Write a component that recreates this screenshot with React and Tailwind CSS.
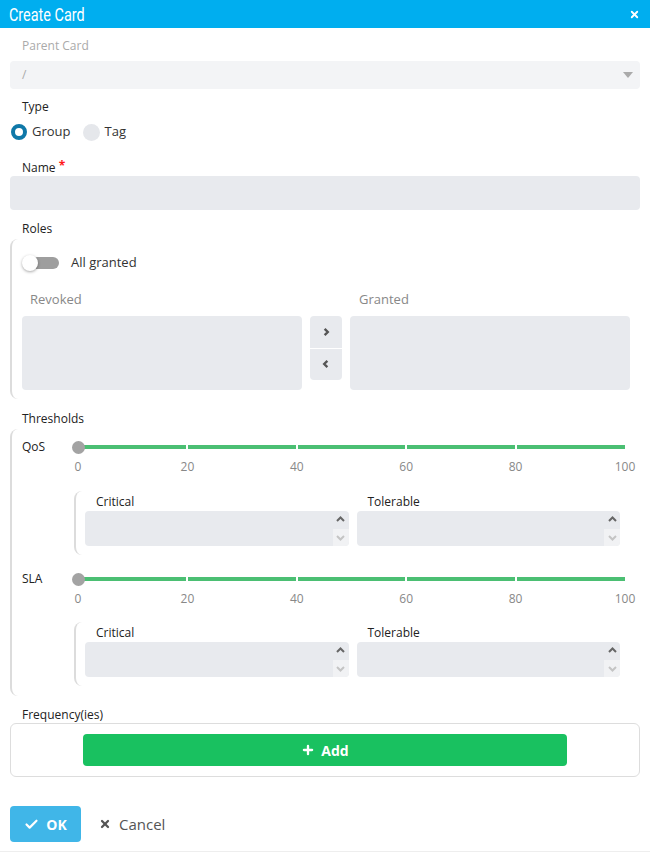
import { Check, Plus, X } from 'lucide-react';

const FONT = { fontFamily: '"Open Sans", "Liberation Sans", sans-serif' };

function Chevron({ dir = 'up', className = '', width = 2 }) {
  const d = {
    up: 'M2 7 L5.5 3.5 L9 7',
    down: 'M2 4 L5.5 7.5 L9 4',
    right: 'M4 2 L7.5 5.5 L4 9',
    left: 'M7 2 L3.5 5.5 L7 9',
  }[dir];
  return (
    <svg viewBox="0 0 11 11" className={className} fill="none" stroke="currentColor" strokeWidth={width}>
      <path d={d} />
    </svg>
  );
}

function NumberInput() {
  return (
    <div className="h-[35px] bg-[#e8eaee] rounded-[4px] flex justify-end overflow-hidden">
      <div className="w-[16px] flex flex-col">
        <div className="flex-1 flex items-center justify-center text-[#666]">
          <Chevron dir="up" className="w-[11px] h-[11px]" />
        </div>
        <div className="flex-1 flex items-center justify-center bg-[#f1f2f4] text-[#c4c4c4]">
          <Chevron dir="down" className="w-[11px] h-[11px]" />
        </div>
      </div>
    </div>
  );
}

function Slider({ label }) {
  return (
    <>
      <div className="flex items-center h-[12px]">
        <div className="w-[56px] text-[12px] text-[#222] leading-none">{label}</div>
        <div className="relative flex-1">
          <div className="flex gap-[2px] h-[4px]">
            <div className="flex-1 bg-[#4bbf73]" />
            <div className="flex-1 bg-[#4bbf73]" />
            <div className="flex-1 bg-[#4bbf73]" />
            <div className="flex-1 bg-[#4bbf73]" />
            <div className="flex-1 bg-[#4bbf73]" />
          </div>
          <div className="absolute left-[-6px] top-[-4.5px] w-[13px] h-[13px] rounded-full bg-[#a3a3a3]" />
        </div>
      </div>
      <div className="flex mt-[7px] h-[14px]">
        <div className="w-[56px]" />
        <div className="flex-1 flex justify-between text-[12px] text-[#888] leading-[14px]">
          {[0, 20, 40, 60, 80, 100].map((n) => (
            <div key={n} className="w-0 flex justify-center whitespace-nowrap">{n}</div>
          ))}
        </div>
      </div>
    </>
  );
}

function Limits() {
  return (
    <div className="ml-[52px] border-l-2 border-[#dcdcdc] rounded-l-[8px] pl-[9px] pr-[5px] pt-[4px] pb-[9px] grid grid-cols-2 gap-x-[8px]">
      <div>
        <div className="pl-[11px] text-[12px] text-[#222] leading-[14px] h-[14px]">Critical</div>
        <div className="mt-[2px]"><NumberInput /></div>
      </div>
      <div>
        <div className="pl-[11px] text-[12px] text-[#222] leading-[14px] h-[14px]">Tolerable</div>
        <div className="mt-[2px]"><NumberInput /></div>
      </div>
    </div>
  );
}

export default function App() {
  return (
    <div className="w-[650px] h-[853px] bg-white overflow-hidden" style={FONT}>
      <div className="h-[28px] bg-[#00aeef] flex items-center justify-between pl-[9px] pr-[10px]">
        <span
          className="text-white text-[18px] origin-left scale-x-[0.8] inline-block whitespace-nowrap"
          style={{ fontFamily: 'Roboto, sans-serif' }}
        >
          Create Card
        </span>
        <X className="w-[11px] h-[11px] text-white" strokeWidth={4} />
      </div>

      <div className="px-[10px]">
        <div className="mt-[10px] h-[16px] leading-[16px] pl-[12px] text-[12px] text-[#aaa]">Parent Card</div>
        <div className="mt-[7px] h-[28px] bg-[#f3f4f6] rounded-[4px] flex items-center justify-between pl-[12px] pr-[7px]">
          <span className="text-[12px] text-[#aaa]">/</span>
          <svg viewBox="0 0 10 6" className="w-[10px] h-[6px]"><path d="M0 0 H10 L5 6 Z" fill="#aaa" /></svg>
        </div>

        <div className="mt-[10px] h-[16px] leading-[16px] pl-[12px] text-[12px] text-[#222]">Type</div>
        <div className="mt-[9px] h-[16px] flex items-center text-[13px] text-[#333]">
          <div className="w-[16px] h-[16px] rounded-full border-[4px] border-[#0f78a8] bg-white ml-[1px]" />
          <span className="ml-[5px]">Group</span>
          <div className="w-[17px] h-[17px] rounded-full bg-[#e5e7eb] ml-[12px]" />
          <span className="ml-[5px]">Tag</span>
        </div>

        <div className="mt-[20px] h-[16px] leading-[16px] pl-[12px] text-[12px] text-[#222]">
          Name <span className="text-[#ff1a1a] font-bold align-top text-[12px] leading-[12px]">*</span>
        </div>
        <div className="h-[34px] bg-[#e8eaee] rounded-[4px]" />

        <div className="mt-[11px] h-[16px] leading-[16px] pl-[12px] text-[12px] text-[#222]">Roles</div>
        <div className="mt-[2px] h-[160px] border-l-2 border-[#dcdcdc] rounded-l-[8px] pl-[10px] pr-[10px] pt-[16px]">
          <div className="h-[16px] flex items-center">
            <div className="relative w-[37px] h-[16px] flex items-center">
              <div className="ml-[8px] w-[29px] h-[12px] rounded-full bg-[#9e9e9e]" />
              <div className="absolute left-0 top-0 w-[16px] h-[16px] rounded-full bg-white shadow-[0_1px_3px_rgba(0,0,0,0.35)]" />
            </div>
            <span className="ml-[12px] text-[13px] text-[#333]">All granted</span>
          </div>
          <div className="mt-[20px] flex gap-[8px] text-[13px] text-[#888] h-[16px] leading-[16px]">
            <div className="w-[280px] pl-[8px]">Revoked</div>
            <div className="w-[32px]" />
            <div className="w-[280px] pl-[9px]">Granted</div>
          </div>
          <div className="mt-[9px] flex gap-[8px]">
            <div className="w-[280px] h-[74px] bg-[#e8eaee] rounded-[4px]" />
            <div className="w-[32px] h-[64px] flex flex-col gap-[1px]">
              <div className="flex-1 bg-[#e8eaee] rounded-t-[4px] flex items-center justify-center text-[#555]">
                <Chevron dir="right" width={2.6} className="w-[10px] h-[10px]" />
              </div>
              <div className="flex-1 bg-[#e8eaee] rounded-b-[4px] flex items-center justify-center text-[#555]">
                <Chevron dir="left" width={2.6} className="w-[10px] h-[10px]" />
              </div>
            </div>
            <div className="w-[280px] h-[74px] bg-[#e8eaee] rounded-[4px]" />
          </div>
        </div>

        <div className="mt-[12px] h-[16px] leading-[16px] pl-[12px] text-[12px] text-[#222]">Thresholds</div>
        <div className="mt-[2px] border-l-2 border-[#dcdcdc] rounded-l-[8px] pl-[10px] pr-[15px] pt-[12px] pb-[10px]">
          <Slider label="QoS" />
          <div className="mt-[17px]"><Limits /></div>
          <div className="mt-[18px]"><Slider label="SLA" /></div>
          <div className="mt-[16px]"><Limits /></div>
        </div>

        <div className="mt-[11px] h-[16px] leading-[16px] pl-[12px] text-[12px] text-[#222]">Frequency(ies)</div>
        <div className="h-[54px] border border-[#dddddd] rounded-[6px] flex items-center justify-center">
          <button className="w-[484px] h-[32px] bg-[#19c160] rounded-[4px] flex items-center justify-center gap-[6px] text-white text-[14px] font-bold">
            <Plus className="w-[14px] h-[14px]" strokeWidth={4} />
            Add
          </button>
        </div>

        <div className="mt-[29px] flex items-center">
          <button className="w-[71px] h-[36px] bg-[#40b6e8] rounded-[4px] flex items-center justify-center gap-[7px] text-white text-[14px] font-bold">
            <Check className="w-[15px] h-[15px]" strokeWidth={3.5} />
            OK
          </button>
          <button className="ml-[18px] flex items-center gap-[8px] text-[15px] text-[#555]">
            <X className="w-[12px] h-[12px]" strokeWidth={4.5} />
            Cancel
          </button>
        </div>
      </div>
      <div className="mt-[9px] h-px bg-[#eeeeee]" />
    </div>
  );
}
